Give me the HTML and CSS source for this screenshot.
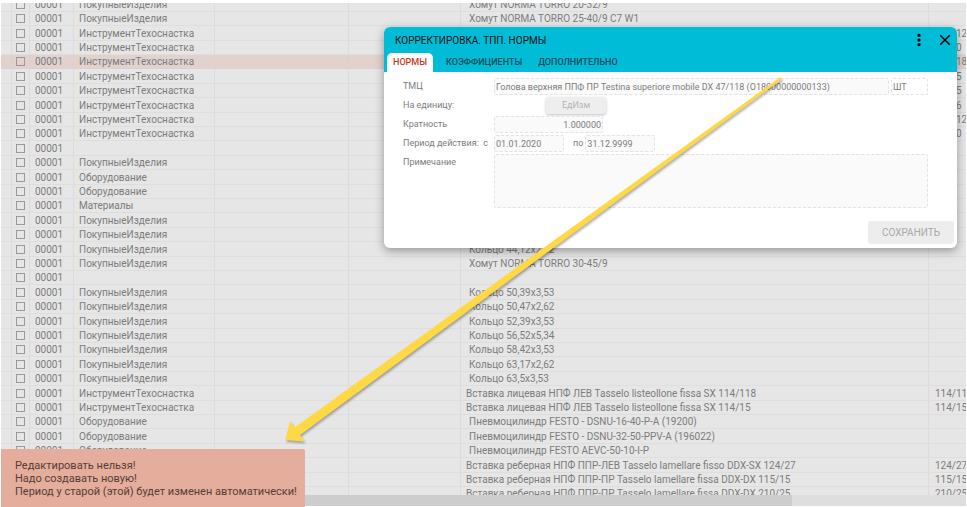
FILE: index.html
```html
<!DOCTYPE html>
<html lang="ru">
<head>
<meta charset="utf-8">
<title>Корректировка. ТПП. Нормы</title>
<link rel="stylesheet" href="styles.css">
</head>
<body>
<main class="app">
  <div class="grid-view">
    <table class="grid">
      <colgroup><col class="c-mark"><col class="c-check"><col class="c-code"><col class="c-type"><col class="c-group"><col class="c-note"><col class="c-name"><col class="c-size"></colgroup>
      <tbody id="rows"></tbody>
    </table>
  </div>
  <div class="scrollbar"><div class="thumb"></div></div>

  <section class="dialog" role="dialog" aria-labelledby="dialog-title">
    <header class="dialog-head">
      <div class="title-bar">
        <h1 id="dialog-title">КОРРЕКТИРОВКА. ТПП. НОРМЫ</h1>
        <button class="icon-button" type="button" aria-label="Меню"><svg width="12" height="14" viewBox="0 0 12 14"><circle cx="6" cy="2.4" r="1.6"/><circle cx="6" cy="7" r="1.6"/><circle cx="6" cy="11.6" r="1.6"/></svg></button>
        <button class="icon-button" type="button" aria-label="Закрыть"><svg width="12" height="12" viewBox="0 0 12 12"><path d="M1.2 1.2l9.6 9.6M10.8 1.2l-9.6 9.6" fill="none" stroke="#000" stroke-width="1.5"/></svg></button>
      </div>
      <nav class="tabs">
        <button class="tab active" type="button">НОРМЫ</button>
        <button class="tab" type="button">КОЭФФИЦИЕНТЫ</button>
        <button class="tab" type="button">ДОПОЛНИТЕЛЬНО</button>
      </nav>
    </header>
    <form class="form">
      <label for="item">ТМЦ</label>
      <div class="line"><input id="item" class="field wide" value="Голова верхняя ППФ ПР Testina superiore mobile DX 47/118 (О18000000000133)"><input class="field unit" aria-label="Единица" value="ШТ"></div>
      <label for="unit">На единицу:</label>
      <div class="line"><button id="unit" class="unit-button" type="button">ЕдИзм</button></div>
      <label for="ratio">Кратность</label>
      <div class="line"><input id="ratio" class="field ratio" value="1.000000"></div>
      <label for="from">Период действия:&nbsp; с</label>
      <div class="line"><input id="from" class="field date" value="01.01.2020"><label class="until" for="to">по</label><input id="to" class="field date" value="31.12.9999"></div>
      <label for="note">Примечание</label>
      <textarea id="note" class="field note"></textarea>
    </form>
    <footer class="dialog-foot"><button class="save" type="button">СОХРАНИТЬ</button></footer>
  </section>

  <div class="toast" role="alert">
    <p>Редактировать нельзя!</p>
    <p>Надо создавать новую!</p>
    <p>Период у старой (этой) будет изменен автоматически!</p>
  </div>

  <svg class="arrow" width="510" height="380" viewBox="280 70 510 380" aria-hidden="true">
    <path d="M285.5 440L290 421L294.5 427.5L780 77.3Q782 77.5 781.5 79.5L300 435L304.5 441.5Z"/>
  </svg>
</main>
<script src="rows.js"></script>
</body>
</html>
```
FILE: styles.css
```css
* { box-sizing: border-box; }

body {
  margin: 0;
  background: #fff;
  color: #7c7c7c;
  font: 10px/13px Roboto, "Noto Sans", sans-serif;
}

button, input, textarea { font: inherit; color: inherit; margin: 0; }

h1, p { margin: 0; }

.app {
  position: relative;
  display: flex;
  flex-direction: column;
  height: 100vh;
  padding: 3px 1px 1px;
  overflow: hidden;
}

.grid-view { flex: 1; min-height: 0; overflow: hidden; background: #e6e6e6; }

.grid {
  width: 100%;
  margin-top: -6px;
  table-layout: fixed;
  border-collapse: separate;
  border-spacing: 0;
}

.c-mark { width: 11px; }
.c-check { width: 18px; }
.c-code { width: 44px; }
.c-type { width: 141px; }
.c-group { width: 134px; }
.c-note { width: 112px; }
.c-size { width: 37px; }

.grid td {
  height: 14px;
  padding: 0 0 0 5px;
  border-right: 1px solid #dcdcdc;
  border-bottom: 1px solid #dedede;
  line-height: 13px;
  white-space: nowrap;
  overflow: hidden;
}

.grid tr:nth-child(5n+1) td, .grid tr:nth-child(5n+3) td { height: 15px; }
.grid .selected td { background: #e1d2ce; border-color: #ddd0cd; }
.grid td:nth-child(2) { padding-left: 4px; }
.grid td:last-child { padding-left: 6px; border-right: 0; }
.grid td.indent { padding-left: 8px; }

.grid input {
  display: block;
  appearance: none;
  width: 9px;
  height: 9px;
  border: 1px solid #999;
}

.scrollbar { flex: none; height: 11px; background: #dedede; }
.thumb { width: 82%; height: 11px; background: #cdcdcd; }

.dialog {
  position: absolute;
  top: 27px;
  left: 384px;
  right: 10px;
  border-radius: 6px;
  background: #fff;
  box-shadow: 0 3px 10px rgba(0, 0, 0, .35);
}

.dialog-head { background: #00bcd7; border-radius: 6px 6px 0 0; }

.title-bar { display: flex; align-items: center; height: 26px; padding: 0 5px 0 11px; gap: 12px; }
.title-bar h1 { flex: 1; color: #111; font-size: 10px; font-weight: 400; }

.icon-button {
  display: flex;
  align-items: center;
  justify-content: center;
  width: 14px;
  height: 16px;
  padding: 0;
  border: 0;
  background: none;
}

.tabs { display: flex; padding-left: 3px; }

.tab {
  height: 19px;
  padding: 0 8px;
  border: 0;
  background: none;
  color: #114d58;
  font-size: 9px;
  font-weight: 500;
}

.tab.active { margin-right: 5px; padding: 0 6px; border-radius: 5px 5px 0 0; background: #fff; color: #c03a1c; }

.form {
  display: grid;
  grid-template-columns: 91px 1fr;
  row-gap: 2px;
  padding: 6px 29px 0 19px;
  font-size: 9px;
}

.form label { line-height: 17px; white-space: nowrap; }

.line { display: flex; height: 17px; gap: 2px; }

.field {
  min-width: 0;
  height: 17px;
  padding: 0 1px;
  border: 1px dashed #e2e2e2;
  border-radius: 2px;
  background: #fafafa;
}

.wide { flex: 1; }
.unit { width: 37px; background: #fff; }
.ratio { width: 109px; text-align: right; }
.date { width: 70px; }
.form .until { margin-left: 7px; }

.unit-button {
  width: 60px;
  margin-left: 52px;
  padding: 0;
  border: 0;
  border-radius: 3px;
  background: #eee;
  color: #b5b5b5;
  box-shadow: 0 1px 3px rgba(0, 0, 0, .25);
}

.note { display: block; width: 100%; height: 54px; resize: none; }

.dialog-foot { display: flex; justify-content: flex-end; padding: 13px 3px 4px; }

.save {
  width: 86px;
  height: 23px;
  padding: 0;
  border: 0;
  border-radius: 3px;
  background: #ededed;
  color: #a8a8a8;
}

.toast {
  position: absolute;
  left: 1px;
  bottom: 0;
  padding: 10px 8px 9px 14px;
  border-radius: 0 2px 0 0;
  background: #e5ae9c;
  color: #553c36;
  font-size: 11px;
}

.arrow {
  position: absolute;
  top: 70px;
  left: 280px;
  fill: #ffd945;
  filter: drop-shadow(1px 2px 1px rgba(0, 0, 0, .3));
  pointer-events: none;
}
```
FILE: rows.js
```js
const P = 'ПокупныеИзделия', I = 'ИнструментТехоснастка', O = 'Оборудование';
const data = [
  [P, 'Хомут NORMA TORRO 20-32/9'], [P, 'Хомут NORMA TORRO 25-40/9 C7 W1'],
  [I, '', '47/112'], [I, '', '47/20'], [I, '', '47/118'], [I, '', '47/15'],
  [I, '', '47/15'], [I, '', '47/16'], [I, '', '47/112'], [I, '', '47/20'],
  ['', ''], [P, ''], [O, ''], [O, ''], ['Материалы', ''], [P, ''], [P, ''],
  [P, 'Кольцо 44,12х2,62'], [P, 'Хомут NORMA TORRO 30-45/9'], ['', ''],
  [P, 'Кольцо 50,39х3,53'], [P, 'Кольцо 50,47х2,62'], [P, 'Кольцо 52,39х3,53'],
  [P, 'Кольцо 56,52х5,34'], [P, 'Кольцо 58,42х3,53'], [P, 'Кольцо 63,17х2,62'],
  [P, 'Кольцо 63,5х3,53'],
  [I, 'Вставка лицевая НПФ ЛЕВ Tasselo listeollone fissa SX 114/118', '114/118'],
  [I, 'Вставка лицевая НПФ ЛЕВ Tasselo listeollone fissa SX 114/15', '114/15'],
  [O, 'Пневмоцилиндр FESTO - DSNU-16-40-P-A (19200)'],
  [O, 'Пневмоцилиндр FESTO - DSNU-32-50-PPV-A (196022)'],
  [O, 'Пневмоцилиндр FESTO AEVC-50-10-I-P'],
  [I, 'Вставка реберная НПФ ППР-ЛЕВ Tasselo lamellare fisso DDX-SX 124/27', '124/27'],
  [I, 'Вставка реберная НПФ ППР-ПР Tasselo lamellare fissa DDX-DX 115/15', '115/15'],
  [I, 'Вставка реберная НПФ ППР-ПР Tasselo lamellare fissa DDX-DX 210/25', '210/25']
];
document.getElementById('rows').innerHTML = data.map(([type, name, size], i) =>
  `<tr${i === 4 ? ' class="selected"' : ''}><td></td><td><input type="checkbox" aria-label="Строка ${i + 1}"></td><td>00001</td><td>${type}</td><td></td><td></td><td${size ? '' : ' class="indent"'}>${name}</td><td>${size || ''}</td></tr>`
).join('');
```
